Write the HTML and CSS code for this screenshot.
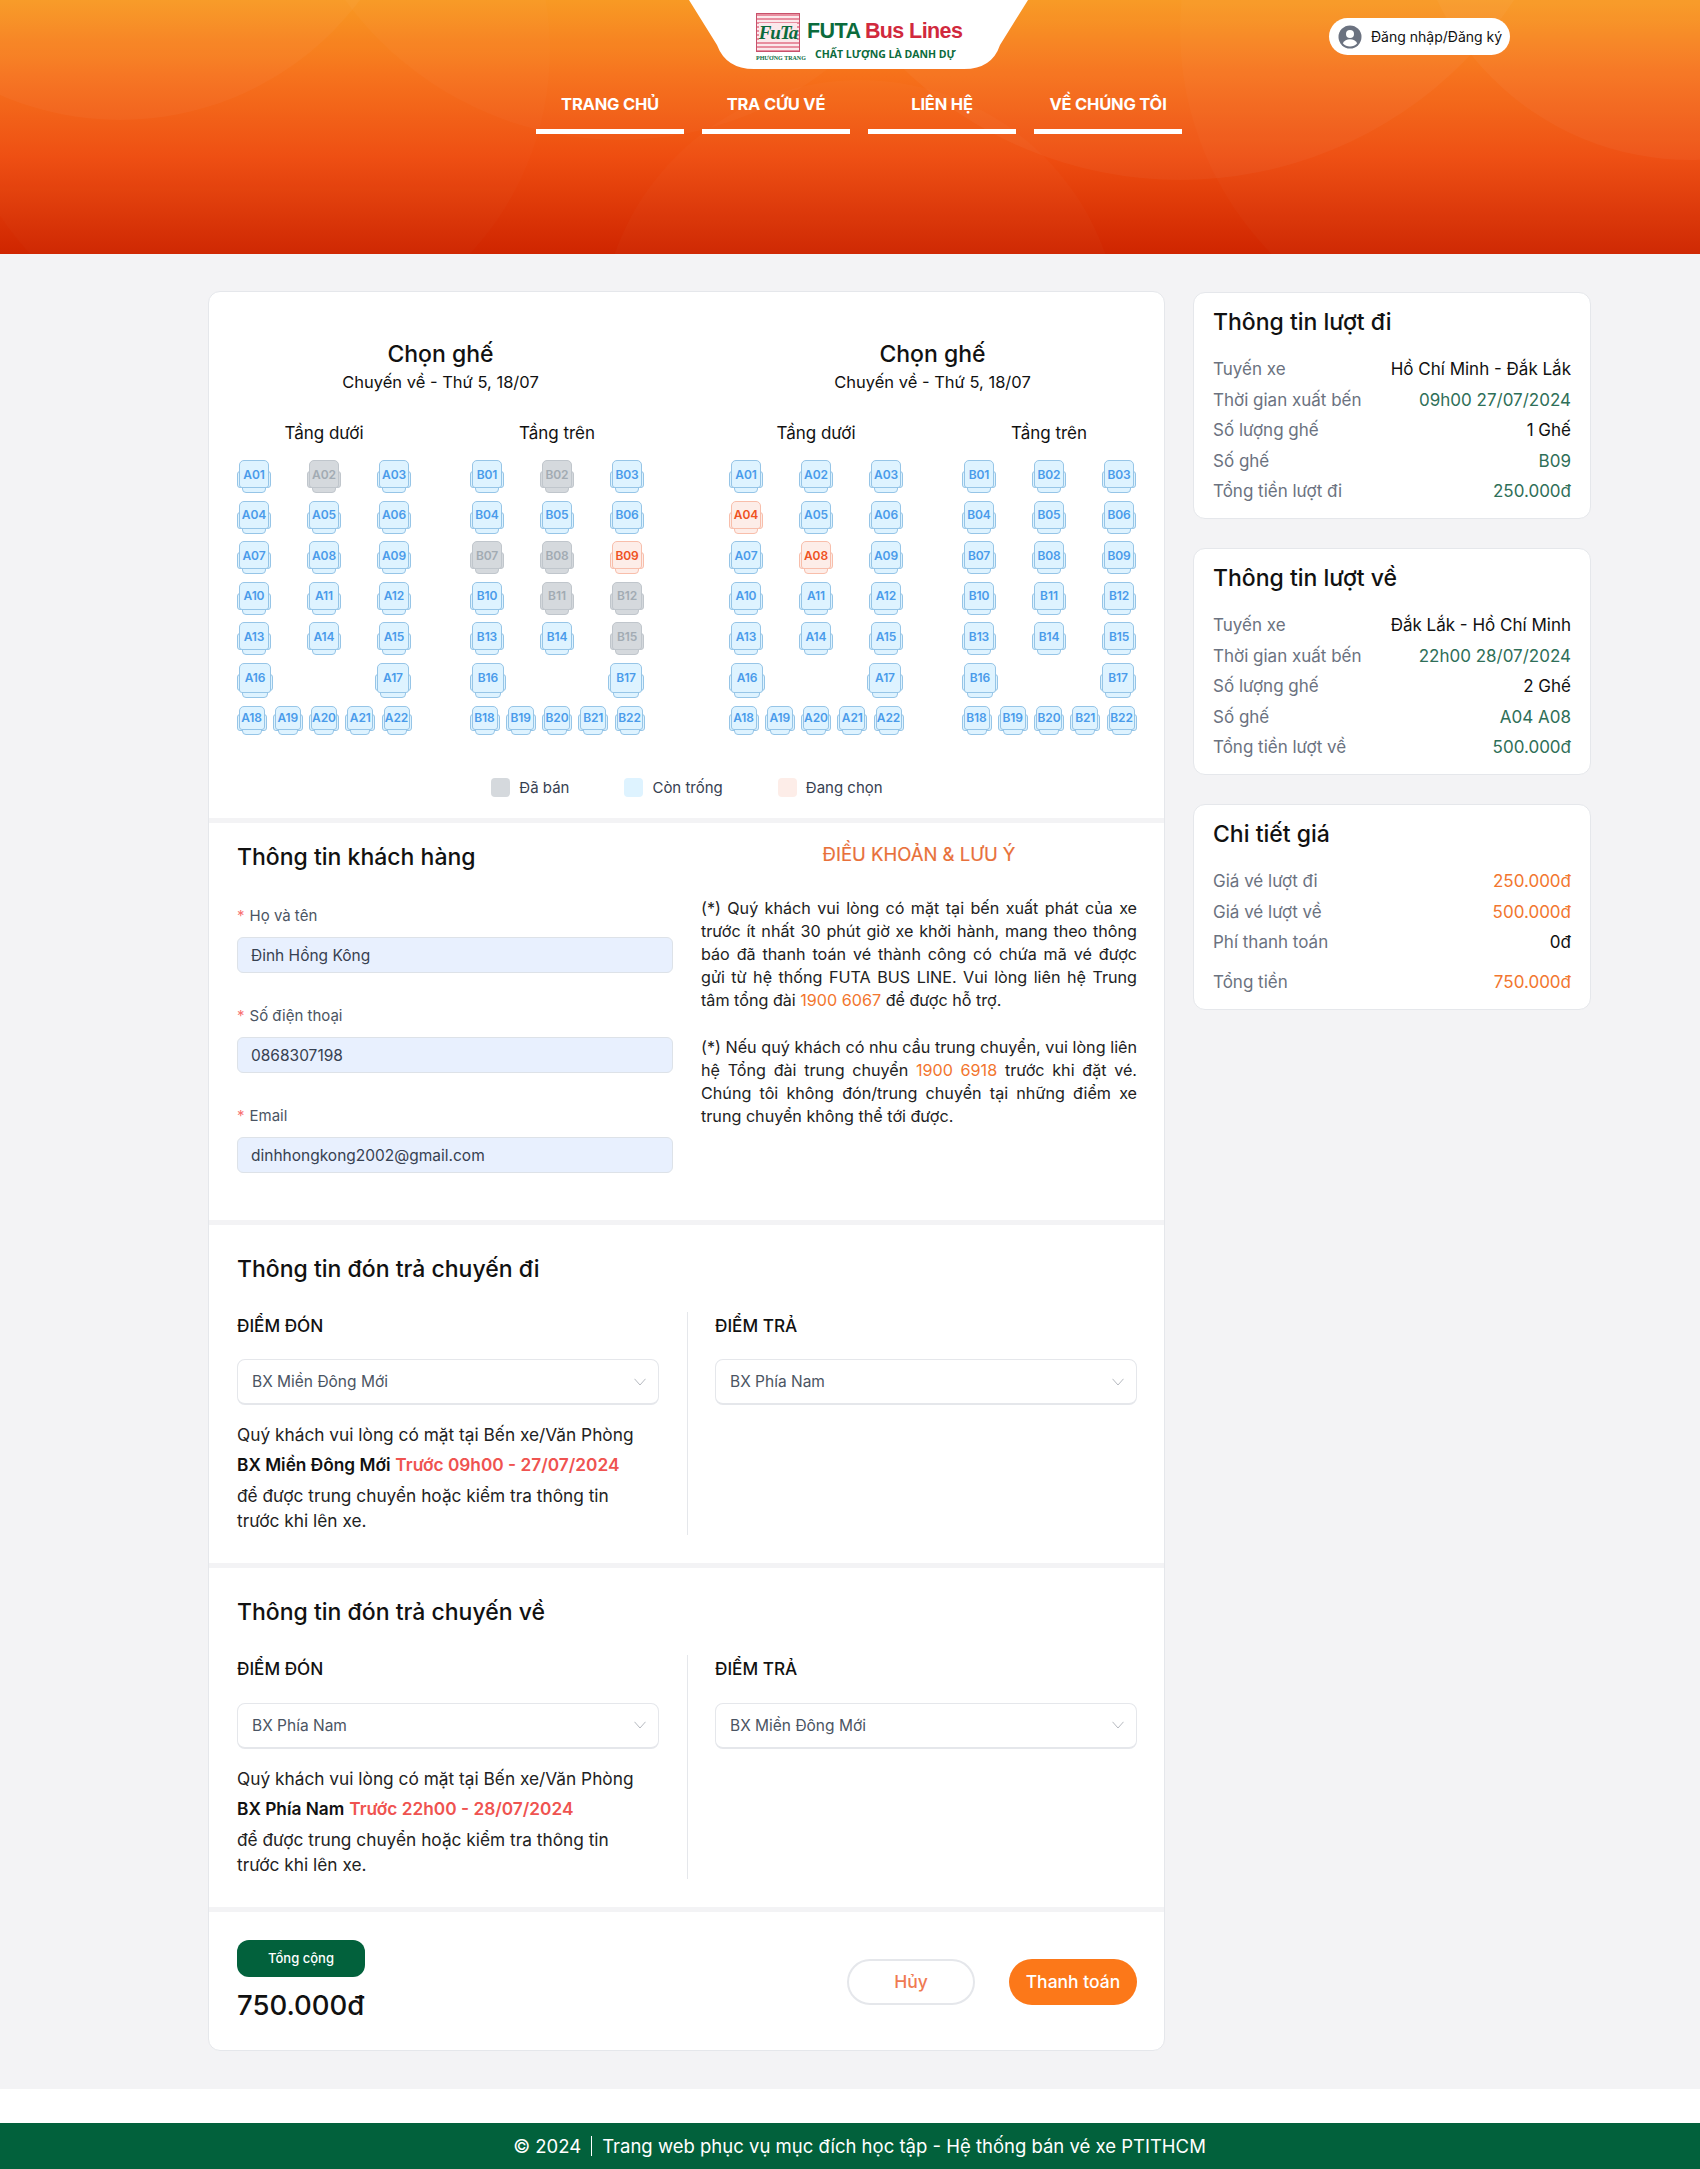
FILE: index.html
```html
<!doctype html>
<html lang="vi">
<head>
<meta charset="utf-8">
<title>FUTA Bus Lines - Đặt vé</title>
<link rel="stylesheet" href="styles.css">
</head>
<body>
<header class="hero">
	<svg class="hero-art" viewBox="0 0 1700 254" preserveAspectRatio="none" aria-hidden="true">
		<circle cx="120" cy="-180" r="300" fill="#fff" fill-opacity=".03"/>
		<circle cx="620" cy="-200" r="340" fill="#fff" fill-opacity=".025"/>
		<circle cx="1180" cy="-220" r="400" fill="#fff" fill-opacity=".035"/>
		<circle cx="1690" cy="-120" r="280" fill="#fff" fill-opacity=".035"/>
		<circle cx="1500" cy="30" r="320" fill="#fff" fill-opacity=".018"/>
		<circle cx="250" cy="50" r="300" fill="#fff" fill-opacity=".015"/>
		<circle cx="860" cy="340" r="260" fill="#fff" fill-opacity=".018"/>
	</svg>
	<div class="hero-top">
		<div class="logo-tab">
			<svg class="logo-shape" viewBox="0 0 339 69" aria-hidden="true"><path d="M0 0H339L311 45Q303 69 275 69H65Q37 69 28 45Z" fill="#fff"/></svg>
			<div class="logo">
				<div class="logo-mark">
					<div class="logo-box"><span>FuTa</span></div>
					<div class="logo-city">PHƯƠNG TRANG</div>
				</div>
				<div class="logo-text">
					<div class="logo-name"><span class="green">FUTA</span> <span class="red">Bus Lines</span></div>
					<div class="logo-tag">CHẤT LƯỢNG LÀ DANH DỰ</div>
				</div>
			</div>
		</div>
		<a class="login">
			<svg viewBox="0 0 24 24" width="24" height="24" aria-hidden="true"><circle cx="12" cy="12" r="11.5" fill="#6b7280"/><circle cx="12" cy="9" r="4" fill="#fff"/><path d="M4.8 18.2c1.4-2.8 4-4 7.2-4s5.800 1.200 7.200 4A10 10 0 0 1 12 21.500a10 10 0 0 1-7.200-3.300z" fill="#fff"/></svg>
			Đăng nhập/Đăng ký
		</a>
	</div>
	<nav class="nav">
		<a>TRANG CHỦ</a>
		<a>TRA CỨU VÉ</a>
		<a>LIÊN HỆ</a>
		<a>VỀ CHÚNG TÔI</a>
	</nav>
</header>

<main class="main">
	<div class="card booking">
		<section class="sec sec-seats">
			<div class="panes">
				<div class="pane">
					<h2 class="pane-title">Chọn ghế</h2>
					<div class="pane-sub">Chuyến về - Thứ 5, 18/07</div>
					<div class="decks">
						<div class="deck">
							<div class="deck-title">Tầng dưới</div>
							<div class="seats">
								<div class="row"><div class="seat">A01</div><div class="seat sold">A02</div><div class="seat">A03</div></div>
								<div class="row"><div class="seat">A04</div><div class="seat">A05</div><div class="seat">A06</div></div>
								<div class="row"><div class="seat">A07</div><div class="seat">A08</div><div class="seat">A09</div></div>
								<div class="row"><div class="seat">A10</div><div class="seat">A11</div><div class="seat">A12</div></div>
								<div class="row"><div class="seat">A13</div><div class="seat">A14</div><div class="seat">A15</div></div>
								<div class="row wide"><div class="seat">A16</div><div class="seat">A17</div></div>
								<div class="row small"><div class="seat">A18</div><div class="seat">A19</div><div class="seat">A20</div><div class="seat">A21</div><div class="seat">A22</div></div>
							</div>
						</div>
						<div class="deck">
							<div class="deck-title">Tầng trên</div>
							<div class="seats">
								<div class="row"><div class="seat">B01</div><div class="seat sold">B02</div><div class="seat">B03</div></div>
								<div class="row"><div class="seat">B04</div><div class="seat">B05</div><div class="seat">B06</div></div>
								<div class="row"><div class="seat sold">B07</div><div class="seat sold">B08</div><div class="seat picked">B09</div></div>
								<div class="row"><div class="seat">B10</div><div class="seat sold">B11</div><div class="seat sold">B12</div></div>
								<div class="row"><div class="seat">B13</div><div class="seat">B14</div><div class="seat sold">B15</div></div>
								<div class="row wide"><div class="seat">B16</div><div class="seat">B17</div></div>
								<div class="row small"><div class="seat">B18</div><div class="seat">B19</div><div class="seat">B20</div><div class="seat">B21</div><div class="seat">B22</div></div>
							</div>
						</div>
					</div>
				</div>
				<div class="pane">
					<h2 class="pane-title">Chọn ghế</h2>
					<div class="pane-sub">Chuyến về - Thứ 5, 18/07</div>
					<div class="decks">
						<div class="deck">
							<div class="deck-title">Tầng dưới</div>
							<div class="seats">
								<div class="row"><div class="seat">A01</div><div class="seat">A02</div><div class="seat">A03</div></div>
								<div class="row"><div class="seat picked">A04</div><div class="seat">A05</div><div class="seat">A06</div></div>
								<div class="row"><div class="seat">A07</div><div class="seat picked">A08</div><div class="seat">A09</div></div>
								<div class="row"><div class="seat">A10</div><div class="seat">A11</div><div class="seat">A12</div></div>
								<div class="row"><div class="seat">A13</div><div class="seat">A14</div><div class="seat">A15</div></div>
								<div class="row wide"><div class="seat">A16</div><div class="seat">A17</div></div>
								<div class="row small"><div class="seat">A18</div><div class="seat">A19</div><div class="seat">A20</div><div class="seat">A21</div><div class="seat">A22</div></div>
							</div>
						</div>
						<div class="deck">
							<div class="deck-title">Tầng trên</div>
							<div class="seats">
								<div class="row"><div class="seat">B01</div><div class="seat">B02</div><div class="seat">B03</div></div>
								<div class="row"><div class="seat">B04</div><div class="seat">B05</div><div class="seat">B06</div></div>
								<div class="row"><div class="seat">B07</div><div class="seat">B08</div><div class="seat">B09</div></div>
								<div class="row"><div class="seat">B10</div><div class="seat">B11</div><div class="seat">B12</div></div>
								<div class="row"><div class="seat">B13</div><div class="seat">B14</div><div class="seat">B15</div></div>
								<div class="row wide"><div class="seat">B16</div><div class="seat">B17</div></div>
								<div class="row small"><div class="seat">B18</div><div class="seat">B19</div><div class="seat">B20</div><div class="seat">B21</div><div class="seat">B22</div></div>
							</div>
						</div>
					</div>
				</div>
			</div>
			<div class="legend">
				<div class="legend-item"><i class="swatch sw-sold"></i>Đã bán</div>
				<div class="legend-item"><i class="swatch sw-free"></i>Còn trống</div>
				<div class="legend-item"><i class="swatch sw-picked"></i>Đang chọn</div>
			</div>
		</section>

		<section class="sec sec-customer">
			<div class="customer-form">
				<h3 class="sec-title">Thông tin khách hàng</h3>
				<div class="field">
					<label class="field-label"><span class="star">*</span>Họ và tên</label>
					<div class="field-input">Đinh Hồng Kông</div>
				</div>
				<div class="field">
					<label class="field-label"><span class="star">*</span>Số điện thoại</label>
					<div class="field-input">0868307198</div>
				</div>
				<div class="field">
					<label class="field-label"><span class="star">*</span>Email</label>
					<div class="field-input">dinhhongkong2002@gmail.com</div>
				</div>
			</div>
			<div class="terms">
				<h3 class="terms-title">ĐIỀU KHOẢN &amp; LƯU Ý</h3>
				<p>(*) Quý khách vui lòng có mặt tại bến xuất phát của xe trước ít nhất 30 phút giờ xe khởi hành, mang theo thông báo đã thanh toán vé thành công có chứa mã vé được gửi từ hệ thống FUTA BUS LINE. Vui lòng liên hệ Trung tâm tổng đài <span class="orange">1900 6067</span> để được hỗ trợ.</p>
				<p>(*) Nếu quý khách có nhu cầu trung chuyển, vui lòng liên hệ Tổng đài trung chuyển <span class="orange">1900 6918</span> trước khi đặt vé. Chúng tôi không đón/trung chuyển tại những điểm xe trung chuyển không thể tới được.</p>
			</div>
		</section>

		<section class="sec sec-stop">
			<h3 class="sec-title">Thông tin đón trả chuyến đi</h3>
			<div class="stops">
				<div class="stop stop-from">
					<div class="stop-label">ĐIỂM ĐÓN</div>
					<div class="select">BX Miền Đông Mới<svg viewBox="0 0 12 8" width="12" height="8" aria-hidden="true"><path d="M.5.800 6 7 11.500.800" fill="none" stroke="#b5b9bf"/></svg></div>
					<div class="stop-note">
						<div>Quý khách vui lòng có mặt tại Bến xe/Văn Phòng</div>
						<div class="stop-when"><b>BX Miền Đông Mới</b> <span class="when">Trước 09h00 - 27/07/2024</span></div>
						<div>để được trung chuyển hoặc kiểm tra thông tin trước khi lên xe.</div>
					</div>
				</div>
				<div class="stop">
					<div class="stop-label">ĐIỂM TRẢ</div>
					<div class="select">BX Phía Nam<svg viewBox="0 0 12 8" width="12" height="8" aria-hidden="true"><path d="M.5.800 6 7 11.500.800" fill="none" stroke="#b5b9bf"/></svg></div>
				</div>
			</div>
		</section>

		<section class="sec sec-stop">
			<h3 class="sec-title">Thông tin đón trả chuyến về</h3>
			<div class="stops">
				<div class="stop stop-from">
					<div class="stop-label">ĐIỂM ĐÓN</div>
					<div class="select">BX Phía Nam<svg viewBox="0 0 12 8" width="12" height="8" aria-hidden="true"><path d="M.5.800 6 7 11.500.800" fill="none" stroke="#b5b9bf"/></svg></div>
					<div class="stop-note">
						<div>Quý khách vui lòng có mặt tại Bến xe/Văn Phòng</div>
						<div class="stop-when"><b>BX Phía Nam</b> <span class="when">Trước 22h00 - 28/07/2024</span></div>
						<div>để được trung chuyển hoặc kiểm tra thông tin trước khi lên xe.</div>
					</div>
				</div>
				<div class="stop">
					<div class="stop-label">ĐIỂM TRẢ</div>
					<div class="select">BX Miền Đông Mới<svg viewBox="0 0 12 8" width="12" height="8" aria-hidden="true"><path d="M.5.800 6 7 11.500.800" fill="none" stroke="#b5b9bf"/></svg></div>
				</div>
			</div>
		</section>

		<section class="sec sec-pay">
			<div>
				<div class="total-pill">Tổng cộng</div>
				<div class="total-price">750.000đ</div>
			</div>
			<div class="pay-btns">
				<button type="button" class="btn btn-cancel">Hủy</button>
				<button type="button" class="btn btn-pay">Thanh toán</button>
			</div>
		</section>
	</div>

	<aside class="rail">
		<div class="card info">
			<h3 class="info-title">Thông tin lượt đi</h3>
			<div class="info-row"><span>Tuyến xe</span><span class="dark">Hồ Chí Minh - Đắk Lắk</span></div>
			<div class="info-row"><span>Thời gian xuất bến</span><span class="teal">09h00 27/07/2024</span></div>
			<div class="info-row"><span>Số lượng ghế</span><span class="dark">1 Ghế</span></div>
			<div class="info-row"><span>Số ghế</span><span class="teal">B09</span></div>
			<div class="info-row"><span>Tổng tiền lượt đi</span><span class="teal">250.000đ</span></div>
		</div>
		<div class="card info">
			<h3 class="info-title">Thông tin lượt về</h3>
			<div class="info-row"><span>Tuyến xe</span><span class="dark">Đắk Lắk - Hồ Chí Minh</span></div>
			<div class="info-row"><span>Thời gian xuất bến</span><span class="teal">22h00 28/07/2024</span></div>
			<div class="info-row"><span>Số lượng ghế</span><span class="dark">2 Ghế</span></div>
			<div class="info-row"><span>Số ghế</span><span class="teal">A04 A08</span></div>
			<div class="info-row"><span>Tổng tiền lượt về</span><span class="teal">500.000đ</span></div>
		</div>
		<div class="card info">
			<h3 class="info-title">Chi tiết giá</h3>
			<div class="info-row"><span>Giá vé lượt đi</span><span class="orange">250.000đ</span></div>
			<div class="info-row"><span>Giá vé lượt về</span><span class="orange">500.000đ</span></div>
			<div class="info-row"><span>Phí thanh toán</span><span class="dark">0đ</span></div>
			<div class="info-row info-total"><span>Tổng tiền</span><span class="orange">750.000đ</span></div>
		</div>
	</aside>
</main>

<footer class="footer">© 2024 <span class="footer-sep"></span> Trang web phục vụ mục đích học tập - Hệ thống bán vé xe PTITHCM</footer>
</body>
</html>
```

FILE: styles.css
```css
*{
	margin: 0;
	padding: 0;
	box-sizing: border-box;
}
body{
	font-family: Inter, "Liberation Sans", sans-serif;
	color: #111;
	background-color: #fff;
}
h2, h3{
	font-weight: 500;
}

/* header */
.hero{
	position: relative;
	height: 254px;
	background: linear-gradient(180deg, #f8981f 0%, #f6701a 30%, #ee4d10 62%, #cf2500 100%);
	overflow: hidden;
}
.hero-art{
	position: absolute;
	inset: 0;
	width: 100%;
	height: 100%;
}
.hero-top{
	position: relative;
	display: flex;
	height: 69px;
	padding-left: 689px;
}
.logo-tab{
	position: relative;
	width: 339px;
	height: 69px;
}
.logo-shape{
	position: absolute;
	inset: 0;
	display: block;
}
.logo{
	position: relative;
	display: flex;
	gap: 7px;
	padding: 13px 0 0 67px;
}
.logo-mark{
	width: 44px;
}
.logo-box{
	display: flex;
	align-items: center;
	justify-content: center;
	height: 39px;
	border: 1px solid #c8516b;
	background: repeating-linear-gradient(180deg, #e88fa0 0 2px, #fbe9ec 2px 4px);
}
.logo-box span{
	font: italic 700 19px/1 "Liberation Serif", serif;
	letter-spacing: -1px;
	color: #0b6b3c;
	background-color: #fbe9ec;
}
.logo-city{
	margin-top: 2px;
	font: 700 6px/8px "Liberation Serif", serif;
	white-space: nowrap;
	color: #0b6b3c;
}
.logo-text{
	padding-top: 5px;
}
.logo-name{
	font: 700 21.5px/26px "Liberation Sans", sans-serif;
	letter-spacing: -.6px;
	white-space: nowrap;
}
.logo-name .green{
	color: #0b6b3c;
}
.logo-name .red{
	color: #d1293d;
}
.logo-tag{
	margin: 3px 0 0 8px;
	font: 700 10.5px/14px "Open Sans", sans-serif;
	white-space: nowrap;
	color: #0b6b3c;
}
.login{
	display: flex;
	align-items: center;
	gap: 9px;
	width: 181px;
	height: 37px;
	margin: 18px 0 0 301px;
	padding-left: 9px;
	border-radius: 19px;
	background-color: #fff;
	font-size: 14px;
	white-space: nowrap;
}
.nav{
	position: relative;
	display: flex;
	justify-content: center;
	gap: 18px;
	padding: 20px 0 0 18px;
}
.nav a{
	width: 148px;
	height: 45px;
	padding-top: 4px;
	border-bottom: 5px solid #fff;
	font-size: 16.5px;
	font-weight: 700;
	line-height: 22px;
	letter-spacing: -.2px;
	text-align: center;
	color: #fff;
}

/* layout */
.main{
	display: grid;
	grid-template-columns: 957px 398px;
	gap: 28px;
	align-items: start;
	padding: 37px 0 38px 208px;
	background-color: #f3f3f5;
}
.card{
	border: 1px solid #e5e7eb;
	border-radius: 12px;
	background-color: #fff;
}
.booking{
	overflow: hidden;
}
.sec{
	padding: 0 27px 0 28px;
	border-top: 5px solid #f3f3f5;
}
.sec-seats{
	padding-top: 46px;
	padding-bottom: 20px;
	border-top: 0;
}

/* seats */
.panes{
	display: grid;
	grid-template-columns: 407px 407px;
	gap: 85px;
}
.pane-title{
	font-size: 23px;
	font-weight: 500;
	line-height: 32px;
	text-align: center;
}
.pane-sub{
	font-size: 16.5px;
	line-height: 24px;
	text-align: center;
}
.decks{
	display: flex;
	justify-content: space-between;
	margin-top: 27px;
}
.deck{
	width: 174px;
}
.deck-title{
	margin-bottom: 15px;
	font-size: 17px;
	line-height: 24px;
	text-align: center;
}
.seats{
	display: grid;
	gap: 7.6px;
	isolation: isolate;
}
.row{
	display: flex;
	justify-content: space-between;
}
.seat{
	--seat-bg: #def3ff;
	--seat-line: #96c5e7;
	position: relative;
	display: flex;
	align-items: center;
	justify-content: center;
	width: 30px;
	height: 28px;
	margin: 0 2px 5px;
	border: 1px solid var(--seat-line);
	border-radius: 5px 5px 3px 3px;
	background-color: var(--seat-bg);
	font-size: 12px;
	font-weight: 600;
	letter-spacing: -.1px;
	color: #4a9bea;
}
.seat::before{
	content: "";
	position: absolute;
	z-index: -1;
	top: 10px;
	left: -3px;
	right: -3px;
	height: 15px;
	border: 1px solid var(--seat-line);
	border-radius: 3px;
	background-color: var(--seat-bg);
}
.seat::after{
	content: "";
	position: absolute;
	z-index: -1;
	left: 2px;
	right: 2px;
	bottom: -6px;
	height: 10px;
	border: 1px solid var(--seat-line);
	border-radius: 0 0 4px 4px;
	background-color: var(--seat-bg);
}
.seat.sold{
	--seat-bg: #d5d9dd;
	--seat-line: #c0c6cc;
	color: #a2abb3;
}
.seat.picked{
	--seat-bg: #fdede8;
	--seat-line: #f8beab;
	color: #ef5222;
}
.row.wide .seat{
	width: 32px;
	height: 30px;
}
.row.small .seat{
	width: 26px;
	height: 24px;
	margin: 0 1.5px 4px;
}
.row.small .seat::before{
	top: 7px;
	height: 15px;
}
.legend{
	display: flex;
	justify-content: center;
	gap: 55px;
	margin-top: 44px;
}
.legend-item{
	display: flex;
	align-items: center;
	gap: 9px;
	font-size: 15px;
	line-height: 20px;
	color: #374151;
}
.swatch{
	width: 19px;
	height: 19px;
	border-radius: 4px;
}
.sw-sold{
	background-color: #d5d9dd;
}
.sw-free{
	background-color: #def3ff;
}
.sw-picked{
	background-color: #fdede8;
}

/* customer */
.sec-title{
	font-size: 23px;
	font-weight: 500;
	line-height: 32px;
}
.sec-customer{
	display: grid;
	grid-template-columns: 436px 436px;
	gap: 28px;
	padding-top: 18px;
	padding-bottom: 47px;
}
.field{
	margin-top: 33px;
}
.field-label{
	display: block;
	margin-bottom: 11px;
	font-size: 15px;
	line-height: 20px;
	color: #4b5563;
}
.star{
	margin-right: 5px;
	color: #f87171;
}
.field-input{
	height: 36px;
	padding-left: 13px;
	border: 1px solid #dde2e8;
	border-radius: 6px;
	background-color: #e8f0fe;
	font-size: 15.5px;
	line-height: 36px;
	color: #374151;
}
.terms-title{
	padding-top: 1px;
	font-size: 18.5px;
	font-weight: 400;
	line-height: 24px;
	text-align: center;
	color: #e8703a;
	-webkit-text-stroke: .2px #e8703a;
}
.terms p{
	margin-top: 24px;
	font-size: 16.15px;
	line-height: 23px;
	text-align: justify;
	color: #222;
}
.terms-title + p{
	margin-top: 31px;
}
.orange{
	color: #f2762e;
}

/* pick up and drop off */
.sec-stop{
	padding-top: 28px;
	padding-bottom: 28px;
}
.stops{
	display: grid;
	grid-template-columns: 451px 1fr;
	margin-top: 27px;
}
.stop-from{
	padding-right: 28px;
	border-right: 1px solid #e5e7eb;
}
.stop:last-child{
	padding-left: 27px;
}
.stop-label{
	font-size: 17.2px;
	font-weight: 500;
	line-height: 28px;
}
.select{
	display: flex;
	align-items: center;
	justify-content: space-between;
	height: 46px;
	margin-top: 19.5px;
	padding: 0 12px 0 14px;
	border: 1px solid #e5e7eb;
	border-bottom-width: 2px;
	border-radius: 8px;
	font-size: 15.5px;
	color: #4b5563;
}
.stop-note{
	margin-top: 17px;
	padding: 0 20px 2px 0;
	font-size: 17.3px;
	line-height: 25px;
	color: #222;
}
.stop-when{
	margin: 5px 0;
	line-height: 26px;
	white-space: nowrap;
}
.stop-when b{
	font-weight: 600;
	color: #111;
}
.when{
	font-weight: 600;
	color: #ef5350;
}

/* pay */
.sec-pay{
	display: flex;
	align-items: center;
	justify-content: space-between;
	padding-top: 28px;
	padding-bottom: 29px;
}
.total-pill{
	width: 128px;
	height: 37px;
	border-radius: 12px;
	background-color: #02613c;
	font-size: 13px;
	font-weight: 500;
	line-height: 37px;
	text-align: center;
	color: #fff;
}
.total-price{
	margin-top: 12px;
	font-size: 27.5px;
	font-weight: 500;
	line-height: 32px;
}
.pay-btns{
	display: flex;
	gap: 34px;
	margin-top: 3px;
}
.btn{
	width: 128px;
	height: 46px;
	border-radius: 23px;
	font-family: inherit;
	font-size: 17.5px;
	font-weight: 500;
}
.btn-cancel{
	border: 2px solid #e5e7eb;
	background-color: #fff;
	color: #ef7a52;
}
.btn-pay{
	border: 0;
	background-color: #fc7819;
	color: #fff;
}

/* right side */
.rail{
	display: grid;
	gap: 29px;
	margin-top: 1px;
}
.info{
	padding: 13px 19px 15px;
}
.info-title{
	margin-bottom: 19px;
	font-size: 23px;
	font-weight: 500;
	line-height: 32px;
}
.info-row{
	display: flex;
	justify-content: space-between;
	margin-top: 6.5px;
	font-size: 17px;
	line-height: 24px;
	color: #6b7280;
}
.info-row .dark{
	color: #111;
}
.info-row .teal{
	color: #2f6f58;
}
.info-total{
	margin-top: 16px;
}

/* footer */
.footer{
	display: flex;
	align-items: center;
	justify-content: center;
	gap: 10px;
	height: 46px;
	margin-top: 34px;
	padding-left: 19px;
	background-color: #02613c;
	font-size: 18.5px;
	color: #fff;
}
.footer-sep{
	width: 1px;
	height: 20px;
	background-color: #fff;
}
```
